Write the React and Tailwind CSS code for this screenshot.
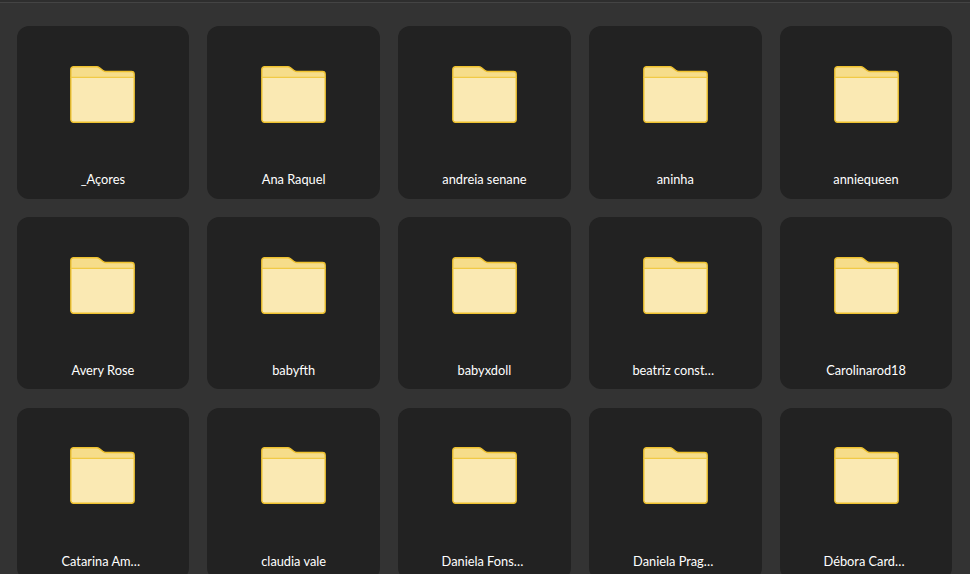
const names = [
  "_Açores", "Ana Raquel", "andreia senane", "aninha", "anniequeen",
  "Avery Rose", "babyfth", "babyxdoll", "beatriz const…", "Carolinarod18",
  "Catarina Am…", "claudia vale", "Daniela Fons…", "Daniela Prag…", "Débora Card…",
];

const FolderIcon = () => (
  <svg width="65" height="57" viewBox="0 0 66 58" fill="none">
    <path
      d="M0.75 10V3.5C0.75 1.9 1.9 0.75 3.5 0.75H27C28.2 0.75 29 1.1 30 1.9L33.5 4.6C34.3 5.3 35 5.6 36.2 5.6H62.5C64.1 5.6 65.25 6.8 65.25 8.4V12H0.75Z"
      fill="#f6dd8a"
    />
    <path
      d="M0.75 11.5H65.25V54.5C65.25 56.1 64.1 57.25 62.5 57.25H3.5C1.9 57.25 0.75 56.1 0.75 54.5Z"
      fill="#fae9b3"
    />
    <path
      d="M0.75 11.5V3.5C0.75 1.9 1.9 0.75 3.5 0.75H27C28.2 0.75 29 1.1 30 1.9L33.5 4.6C34.3 5.3 35 5.6 36.2 5.6H62.5C64.1 5.6 65.25 6.8 65.25 8.4V54.5C65.25 56.1 64.1 57.25 62.5 57.25H3.5C1.9 57.25 0.75 56.1 0.75 54.5Z"
      stroke="#efc22f"
      strokeWidth="1.4"
    />
    <path d="M0.75 11.5H65.25" stroke="#f1ca45" strokeWidth="1.2" />
  </svg>
);

const FolderCard = ({ name }) => (
  <div className="flex h-[172.5px] flex-col items-center rounded-xl bg-[#222222] pt-[39.8px]">
    <FolderIcon />
    {/* the cut off names sit a little left of center */}
    <div
      className={
        name.endsWith("…")
          ? "mt-auto pb-[10.5px] pr-[4px] text-[12.8px] leading-[18px] text-white"
          : "mt-auto pb-[10.5px] text-[12.8px] leading-[18px] text-white"
      }
    >
      {name}
    </div>
  </div>
);

export default function App() {
  return (
    <div className="h-[574px] overflow-hidden bg-[#333333] font-['Lato',sans-serif]">
      <div className="h-[3px] border-b border-[#444444] bg-[#2e2e2e]" />
      <div className="grid grid-cols-5 gap-x-[18.1px] gap-y-[18.25px] pl-[16.5px] pr-[17.6px] pt-[23px]">
        {names.map((name) => (
          <FolderCard key={name} name={name} />
        ))}
      </div>
    </div>
  );
}
